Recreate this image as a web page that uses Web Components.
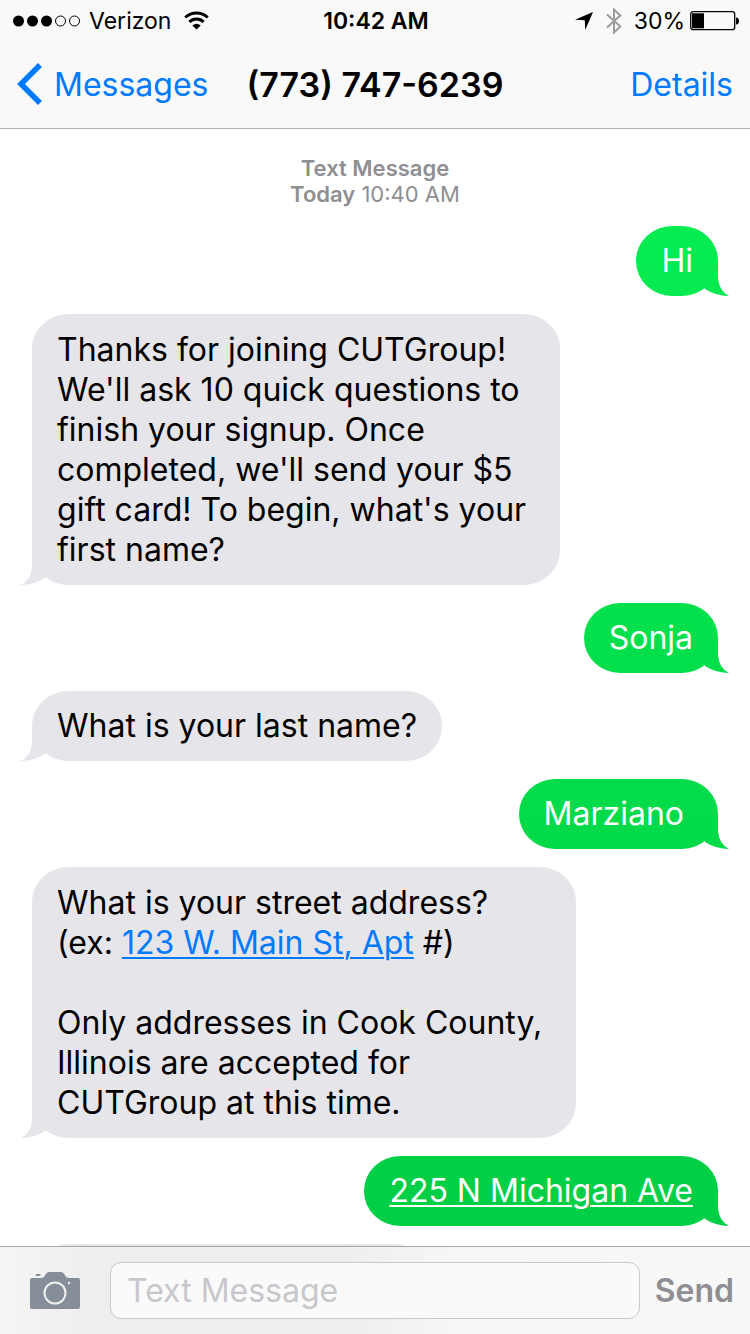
<!DOCTYPE html>
<html lang="en">
<head>
<meta charset="utf-8">
<meta name="viewport" content="width=device-width, initial-scale=1">
<title>Messages</title>
<style>
  html, body { margin: 0; height: 100%; }
  body { font-family: Inter, "Liberation Sans", sans-serif; background: #fff; color: #000; }
</style>
</head>
<body>
<message-screen></message-screen>

<template id="message-screen">
  <style>
    :host { display: grid; grid-template: auto minmax(0, 1fr) auto / minmax(0, 1fr); height: 100vh; overflow: hidden; }
    header { grid-area: 1 / 1; background: #f9f9f9; border-bottom: 1px solid #b2b2b2; }
    message-thread { grid-area: 2 / 1 / 4 / 2; }
    message-composer { grid-area: 3 / 1; }
  </style>
  <header>
    <status-bar></status-bar>
    <nav-bar>(773) 747-6239</nav-bar>
  </header>
  <message-thread>
    <thread-stamp><strong>Text Message</strong><br><strong>Today</strong> 10:40 AM</thread-stamp>
    <chat-bubble sent>Hi</chat-bubble>
    <chat-bubble long>Thanks for joining CUTGroup!<br>We'll ask 10 quick questions to<br>finish your signup. Once<br>completed, we'll send your $5<br>gift card! To begin, what's your<br>first name?</chat-bubble>
    <chat-bubble sent>Sonja</chat-bubble>
    <chat-bubble>What is your last name?</chat-bubble>
    <chat-bubble sent roomy>Marziano</chat-bubble>
    <chat-bubble long>What is your street address?<br>(ex: <a href="#map">123 W. Main St, Apt</a> #)<br><br>Only addresses in Cook County,<br>Illinois are accepted for<br>CUTGroup at this time.</chat-bubble>
    <chat-bubble sent><a href="#map">225 N Michigan Ave</a></chat-bubble>
    <chat-bubble pending></chat-bubble>
  </message-thread>
  <message-composer></message-composer>
</template>

<template id="status-bar">
  <style>
    :host { display: grid; grid-template-columns: 1fr auto 1fr; align-items: center; height: 42px; padding: 0 11px 0 13px; font-size: 23px; line-height: 42px; }
    .group { display: flex; align-items: center; }
    .left { gap: 9px; }
    .right { justify-content: flex-end; }
    .wifi { margin-left: 4px; }
    time { font-weight: 600; }
    .bt { margin: 0 12px 0 13px; }
    .battery { margin-left: 5px; }
    svg { display: block; flex: none; }
  </style>
  <div class="group left">
    <svg width="67" height="12" viewBox="0 0 67 12" aria-label="Signal">
      <circle cx="5.5" cy="6" r="5.5"/><circle cx="19.5" cy="6" r="5.5"/><circle cx="33.5" cy="6" r="5.5"/>
      <g fill="none" stroke="#000"><circle cx="47.5" cy="6" r="5"/><circle cx="61.5" cy="6" r="5"/></g>
    </svg>
    <span>Verizon</span>
    <svg class="wifi" width="25" height="20" viewBox="0 0 25 20" aria-label="Wi-Fi">
      <g fill="none" stroke="#000" stroke-width="3"><path d="M1.3 6.500A16 16 0 0 1 23.700 6.500"/><path d="M5.300 10.900A10.300 10.300 0 0 1 19.700 10.900"/></g>
      <path d="M8.300 14.500Q12.500 10.900 16.700 14.500L12.500 18.600Z"/>
    </svg>
  </div>
  <time>10:42 AM</time>
  <div class="group right">
    <svg width="18" height="18" viewBox="0 0 18 18" aria-label="Location"><path d="M18 0L10.200 18L9.800 8.300L0 7.800Z"/></svg>
    <svg class="bt" width="16" height="28" viewBox="0 0 16 28" fill="none" stroke="#9b9b9b" stroke-width="2" aria-label="Bluetooth"><path d="M1 7.500L14.300 19.500L8 25.500V2.500L14.300 8.500L1 20.500"/></svg>
    <span>30%</span>
    <svg class="battery" width="49" height="20" viewBox="0 0 49 20" aria-label="Battery">
      <rect x=".7" y=".7" width="44" height="18" rx="2.500" fill="none" stroke="#000" stroke-width="1.300"/>
      <rect x="2" y="2.300" width="12" height="15"/><path d="M46 6.500Q49 6.500 49 10T46 13.500Z"/>
    </svg>
  </div>
</template>

<template id="nav-bar">
  <style>
    :host { display: grid; grid-template-columns: 1fr auto 1fr; align-items: center; box-sizing: border-box; height: 86px; padding: 0 17px 2px; font-size: 32px; }
    a { color: #007aff; text-decoration: none; display: flex; align-items: center; gap: 12px; }
    .details { justify-self: end; }
    h1 { margin: 0; font-size: 34px; font-weight: 600; }
    svg { display: block; }
  </style>
  <a href="#messages"><svg width="25" height="42" viewBox="0 0 25 42" fill="none" stroke="#007aff" stroke-width="5.500" aria-hidden="true"><path d="M23 2L4 21L23 40"/></svg>Messages</a>
  <h1><slot></slot></h1>
  <a class="details" href="#details">Details</a>
</template>

<template id="message-thread">
  <style>
    :host { display: flex; flex-direction: column; gap: 18px; padding: 26px 32px 0; overflow: hidden; }
  </style>
  <slot></slot>
</template>

<template id="thread-stamp">
  <style>
    :host { display: block; padding-bottom: 1px; text-align: center; font-size: 22px; line-height: 26px; color: #8e8e93; }
    ::slotted(strong) { font-weight: 600; }
  </style>
  <slot></slot>
</template>

<template id="chat-bubble">
  <style>
    :host { --fill: #e5e5ea; position: relative; flex: none; align-self: flex-start; box-sizing: border-box; min-height: 70px; padding: 15px 25px; border-radius: 36px / 35px; background: var(--fill); font-size: 32px; line-height: 40px; }
    :host([long]) { padding: 16px 34px 15px 25px; }
    :host([sent]) { --fill: linear-gradient(#06f353, #00cb44) fixed; align-self: flex-end; color: #fff; }
    :host([roomy]) { padding-right: 34px; }
    :host([pending]) { width: 58%; min-height: 150px; }
    .tail { position: absolute; left: -11px; bottom: 0; width: 35px; height: 35px; background: var(--fill); clip-path: path("M11 0V17Q10 30 0 35Q13 35 24 28L35 0Z"); }
    :host([sent]) .tail { left: auto; right: -11px; clip-path: path("M24 0V17Q25 30 35 35Q22 35 11 28L0 0Z"); }
    ::slotted(a) { color: #007aff; text-decoration: underline; text-decoration-thickness: 2px; text-underline-offset: 3px; }
    :host([sent]) ::slotted(a) { color: #fff; }
    .text { position: relative; }
  </style>
  <span class="tail"></span><span class="text"><slot></slot></span>
</template>

<template id="message-composer">
  <style>
    :host { position: relative; display: flex; align-items: center; box-sizing: border-box; padding: 15px 16px 15px 30px; border-top: 1px solid #a9a9ad; background: linear-gradient(90deg, #f5f5f5, #eee 12%, #eee 46%, #f6f6f6 60%, #f7f8f7); }
    button { border: 0; padding: 0; background: none; font: inherit; flex: none; }
    .camera { margin-right: 30px; }
    svg { display: block; }
    label { flex: 1; display: flex; min-width: 0; }
    input { flex: 1; min-width: 0; box-sizing: border-box; height: 57px; border: 1px solid #c8c8cd; border-radius: 11px; padding: 0 16px; background: #fafafa; font: inherit; font-size: 32px; outline: 0; }
    input::placeholder { color: #c7c7cc; opacity: 1; }
    .send { margin-left: 15px; color: #8e8e93; font-size: 32px; font-weight: 600; }
  </style>
  <button class="camera" aria-label="Camera">
    <svg width="50" height="37" viewBox="0 0 50 37">
      <path fill="#868e99" d="M2 6H11Q14 6 15 3.500Q16.500 0 19 0H31Q33.500 0 35 3.500Q36.500 6 39 6H48Q50 6 50 8V35Q50 37 48 37H2Q0 37 0 35V8Q0 6 2 6Z"/>
      <rect x="5.500" y="2" width="5" height="2" rx="1" fill="#868e99"/>
      <circle cx="25" cy="21" r="10.500" fill="none" stroke="#f0f0f0" stroke-width="2"/><circle cx="39" cy="11" r="1.200" fill="#f0f0f0"/>
    </svg>
  </button>
  <label><input type="text" placeholder="Text Message" aria-label="Text Message"></label>
  <button class="send">Send</button>
</template>

<script>
  const define = (name) => customElements.define(name, class extends HTMLElement {
    constructor() {
      super();
      this.attachShadow({ mode: "open" })
        .append(document.getElementById(name).content.cloneNode(true));
    }
  });
  ["status-bar", "nav-bar", "thread-stamp", "chat-bubble", "message-thread", "message-composer", "message-screen"].forEach(define);
</script>
</body>
</html>
